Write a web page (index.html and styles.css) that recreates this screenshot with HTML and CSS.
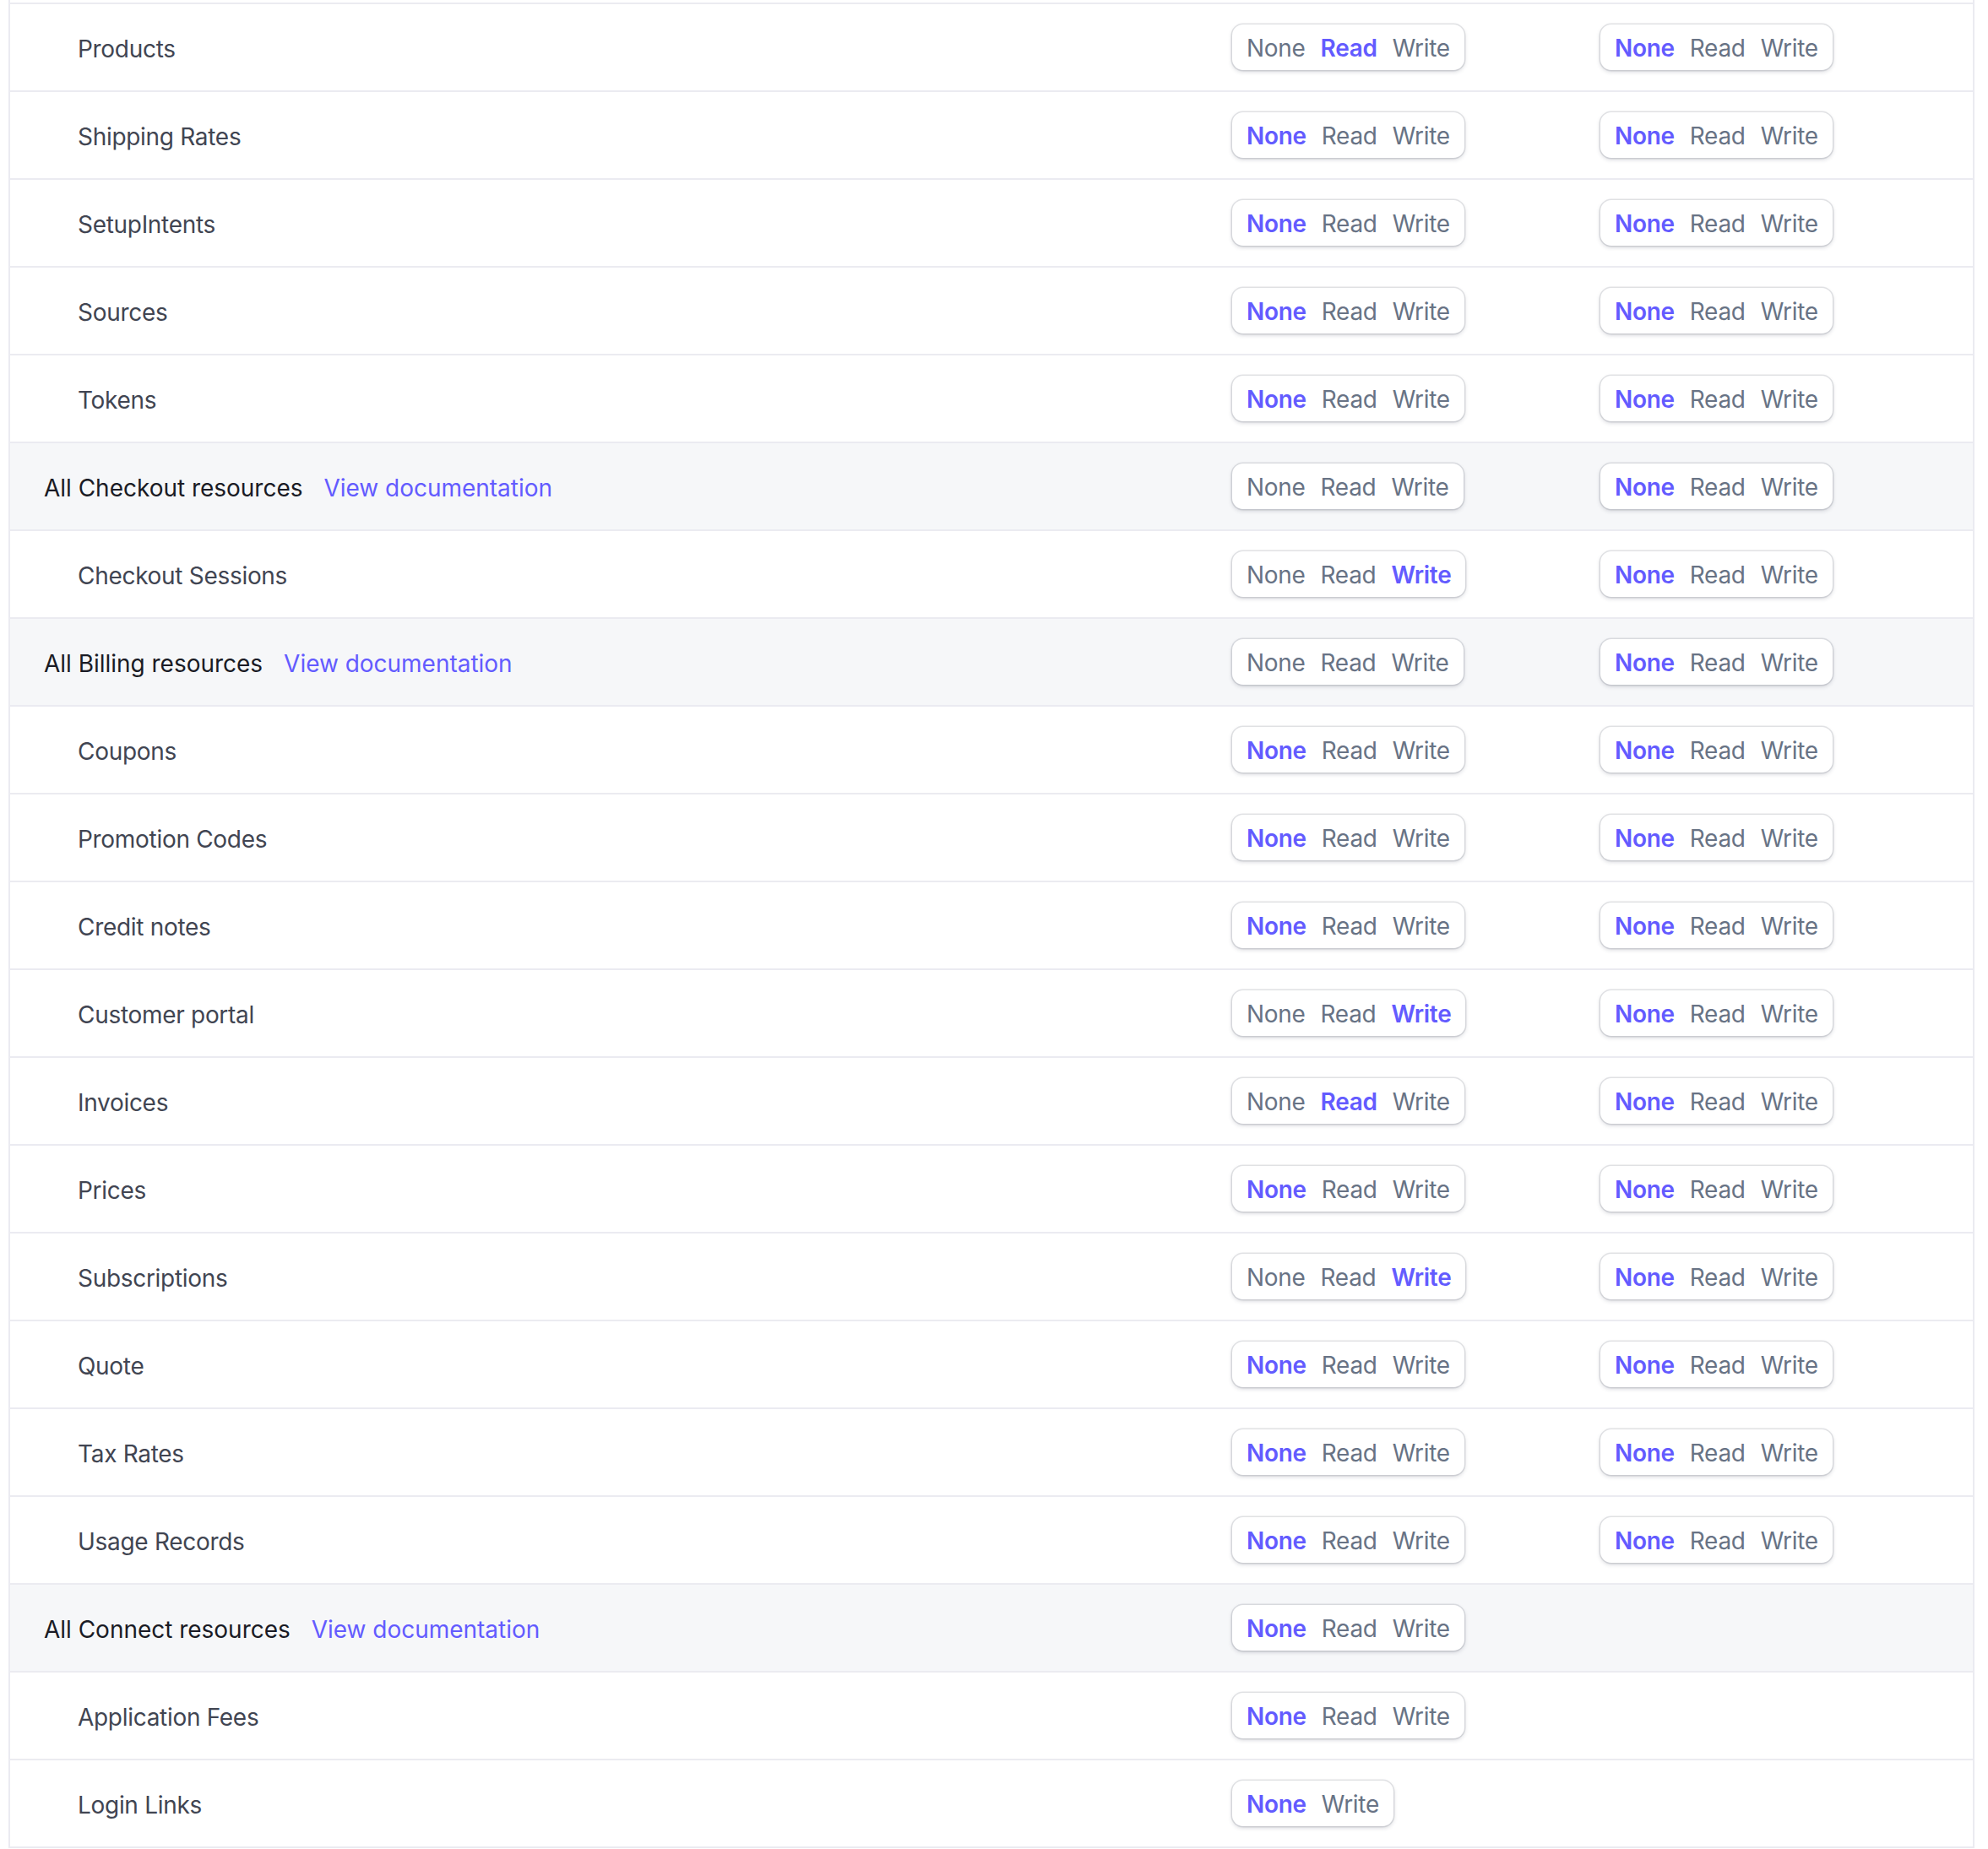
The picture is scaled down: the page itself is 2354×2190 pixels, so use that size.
FILE: index.html
```html
<!DOCTYPE html>
<html lang="en">
<head>
<meta charset="utf-8">
<title>Permissions</title>
<link rel="stylesheet" href="styles.css">
</head>
<body>
<div class="table">
  <div class="rows">
    <div class="row"><div class="label sub">Products</div><div class="cell"><div class="seg"><span>None</span><span class="on">Read</span><span>Write</span></div></div><div class="cell"><div class="seg"><span class="on">None</span><span>Read</span><span>Write</span></div></div></div>
    <div class="row"><div class="label sub">Shipping Rates</div><div class="cell"><div class="seg"><span class="on">None</span><span>Read</span><span>Write</span></div></div><div class="cell"><div class="seg"><span class="on">None</span><span>Read</span><span>Write</span></div></div></div>
    <div class="row"><div class="label sub">SetupIntents</div><div class="cell"><div class="seg"><span class="on">None</span><span>Read</span><span>Write</span></div></div><div class="cell"><div class="seg"><span class="on">None</span><span>Read</span><span>Write</span></div></div></div>
    <div class="row"><div class="label sub">Sources</div><div class="cell"><div class="seg"><span class="on">None</span><span>Read</span><span>Write</span></div></div><div class="cell"><div class="seg"><span class="on">None</span><span>Read</span><span>Write</span></div></div></div>
    <div class="row"><div class="label sub">Tokens</div><div class="cell"><div class="seg"><span class="on">None</span><span>Read</span><span>Write</span></div></div><div class="cell"><div class="seg"><span class="on">None</span><span>Read</span><span>Write</span></div></div></div>
    <div class="row group"><div class="label head">All Checkout resources<a class="doc" href="#">View documentation</a></div><div class="cell"><div class="seg"><span>None</span><span>Read</span><span>Write</span></div></div><div class="cell"><div class="seg"><span class="on">None</span><span>Read</span><span>Write</span></div></div></div>
    <div class="row"><div class="label sub">Checkout Sessions</div><div class="cell"><div class="seg"><span>None</span><span>Read</span><span class="on">Write</span></div></div><div class="cell"><div class="seg"><span class="on">None</span><span>Read</span><span>Write</span></div></div></div>
    <div class="row group"><div class="label head">All Billing resources<a class="doc" href="#">View documentation</a></div><div class="cell"><div class="seg"><span>None</span><span>Read</span><span>Write</span></div></div><div class="cell"><div class="seg"><span class="on">None</span><span>Read</span><span>Write</span></div></div></div>
    <div class="row"><div class="label sub">Coupons</div><div class="cell"><div class="seg"><span class="on">None</span><span>Read</span><span>Write</span></div></div><div class="cell"><div class="seg"><span class="on">None</span><span>Read</span><span>Write</span></div></div></div>
    <div class="row"><div class="label sub">Promotion Codes</div><div class="cell"><div class="seg"><span class="on">None</span><span>Read</span><span>Write</span></div></div><div class="cell"><div class="seg"><span class="on">None</span><span>Read</span><span>Write</span></div></div></div>
    <div class="row"><div class="label sub">Credit notes</div><div class="cell"><div class="seg"><span class="on">None</span><span>Read</span><span>Write</span></div></div><div class="cell"><div class="seg"><span class="on">None</span><span>Read</span><span>Write</span></div></div></div>
    <div class="row"><div class="label sub">Customer portal</div><div class="cell"><div class="seg"><span>None</span><span>Read</span><span class="on">Write</span></div></div><div class="cell"><div class="seg"><span class="on">None</span><span>Read</span><span>Write</span></div></div></div>
    <div class="row"><div class="label sub">Invoices</div><div class="cell"><div class="seg"><span>None</span><span class="on">Read</span><span>Write</span></div></div><div class="cell"><div class="seg"><span class="on">None</span><span>Read</span><span>Write</span></div></div></div>
    <div class="row"><div class="label sub">Prices</div><div class="cell"><div class="seg"><span class="on">None</span><span>Read</span><span>Write</span></div></div><div class="cell"><div class="seg"><span class="on">None</span><span>Read</span><span>Write</span></div></div></div>
    <div class="row"><div class="label sub">Subscriptions</div><div class="cell"><div class="seg"><span>None</span><span>Read</span><span class="on">Write</span></div></div><div class="cell"><div class="seg"><span class="on">None</span><span>Read</span><span>Write</span></div></div></div>
    <div class="row"><div class="label sub">Quote</div><div class="cell"><div class="seg"><span class="on">None</span><span>Read</span><span>Write</span></div></div><div class="cell"><div class="seg"><span class="on">None</span><span>Read</span><span>Write</span></div></div></div>
    <div class="row"><div class="label sub">Tax Rates</div><div class="cell"><div class="seg"><span class="on">None</span><span>Read</span><span>Write</span></div></div><div class="cell"><div class="seg"><span class="on">None</span><span>Read</span><span>Write</span></div></div></div>
    <div class="row"><div class="label sub">Usage Records</div><div class="cell"><div class="seg"><span class="on">None</span><span>Read</span><span>Write</span></div></div><div class="cell"><div class="seg"><span class="on">None</span><span>Read</span><span>Write</span></div></div></div>
    <div class="row group"><div class="label head">All Connect resources<a class="doc" href="#">View documentation</a></div><div class="cell"><div class="seg"><span class="on">None</span><span>Read</span><span>Write</span></div></div><div class="cell"></div></div>
    <div class="row"><div class="label sub">Application Fees</div><div class="cell"><div class="seg"><span class="on">None</span><span>Read</span><span>Write</span></div></div><div class="cell"></div></div>
    <div class="row"><div class="label sub">Login Links</div><div class="cell"><div class="seg"><span class="on">None</span><span>Write</span></div></div><div class="cell"></div></div>
  </div>
</div>
</body>
</html>
```
FILE: styles.css
```css
html, body {
  margin: 0;
  padding: 0;
  background: #ffffff;
}

body {
  font-family: Inter, "Noto Sans", "Liberation Sans", sans-serif;
  font-size: 28px;
  letter-spacing: -0.3px;
  color: #414552;
  -webkit-font-smoothing: antialiased;
}

.table {
  margin-left: 10px;
  width: 2328px;
  box-sizing: border-box;
  border-left: 2px solid #ebebf1;
  border-right: 2px solid #ebebf1;
  padding-top: 3px;
}

.rows {
  border-top: 2px solid #ebebf1;
}

.row {
  display: grid;
  grid-template-columns: 1fr 436px 441px;
  height: 104px;
  box-sizing: border-box;
  border-bottom: 2px solid #ebebf1;
  align-items: center;
}

.row.group {
  background: #f6f7f9;
}

.label {
  display: flex;
  align-items: center;
  white-space: nowrap;
  line-height: 40px;
  padding-top: 3px;
}

.label.sub {
  padding-left: 80px;
  color: #414552;
}

.label.head {
  padding-left: 40px;
  color: #1a1b25;
  letter-spacing: -0.02px;
}

.doc {
  margin-left: 25px;
  color: #635bff;
  text-decoration: none;
}

.cell {
  display: flex;
  align-items: center;
}

.seg {
  display: inline-flex;
  align-items: center;
  height: 54px;
  padding: 0 8px;
  margin-top: -1px;
  background: #ffffff;
  border-radius: 13px;
  box-shadow: 0 0 0 1.5px rgba(64, 68, 82, 0.13), 0 2px 5px rgba(60, 66, 87, 0.22);
}

.seg span {
  padding: 3px 9px 0;
  color: #687385;
  line-height: 40px;
}

.seg span.on {
  color: #635bff;
  font-weight: 600;
}
```
